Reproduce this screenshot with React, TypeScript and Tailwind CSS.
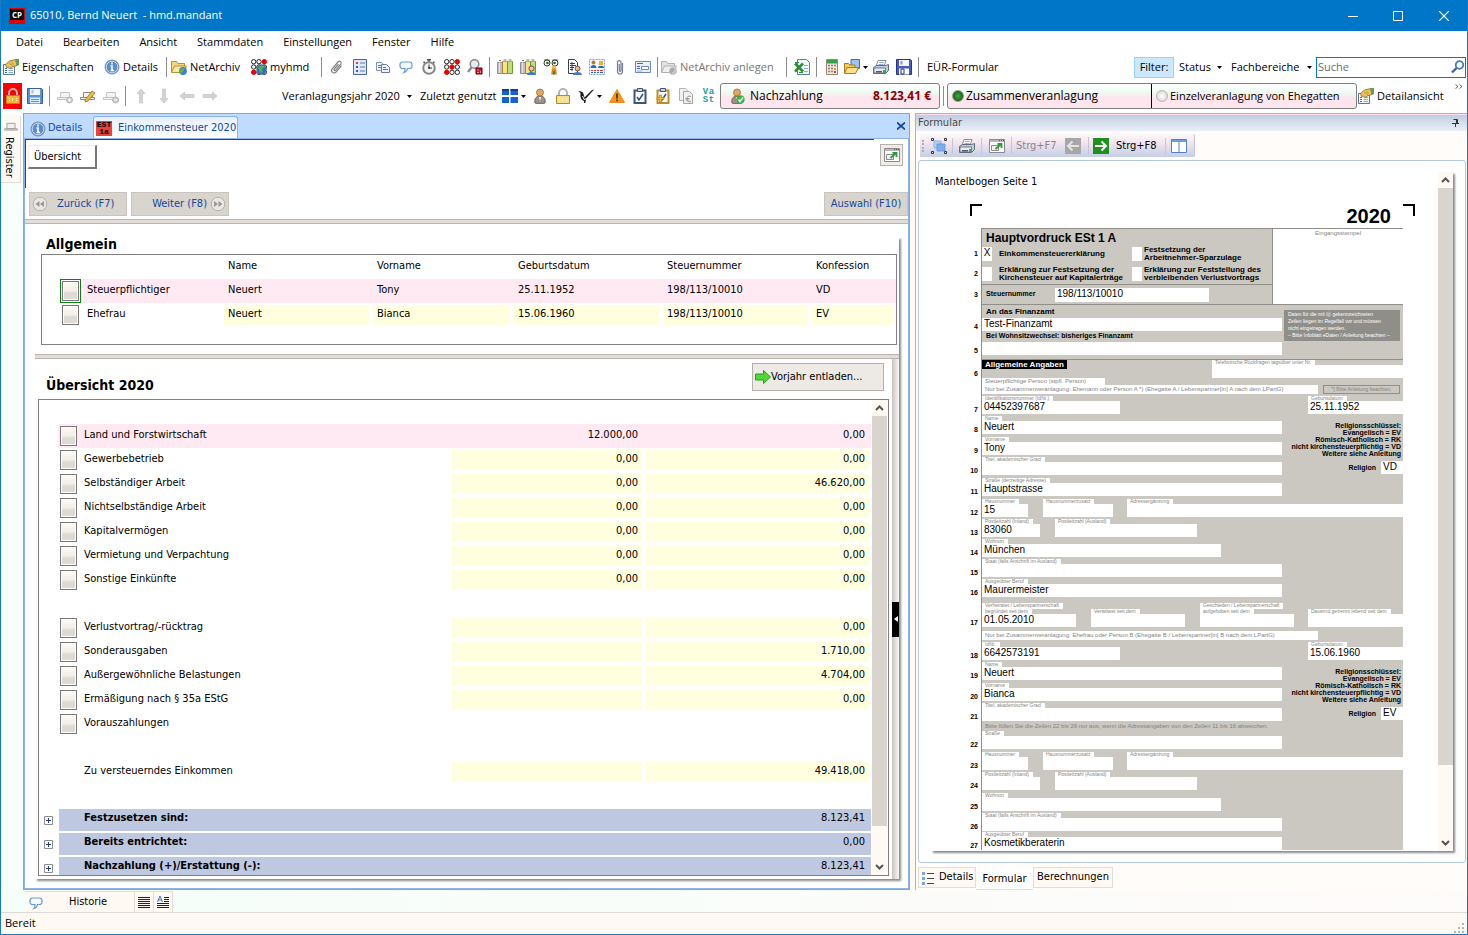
import React from 'react';

type Kids = { children?: React.ReactNode };

/* ---------- icons ---------- */

const Svg: React.FC<Kids & { className?: string; box?: string }> = ({ children, className = 'w-4 h-4', box = '0 0 16 16' }) => (
  <svg viewBox={box} className={`${className} shrink-0`} fill="none" aria-hidden="true">
    {children}
  </svg>
);

const Caret = () => (
  <Svg className="w-[5px] h-[3px]" box="0 0 5 3"><path d="M0 0h5L2.500 3z" fill="#000" /></Svg>
);

const PropsIcon = () => (
  <Svg>
    <path d="M.5 5.500h11v10H.5z" fill="#f4f8fd" stroke="#56779f" />
    <path d="M2 9.500h2M2 11.500h2M2 13.500h2" stroke="#3b6fb5" />
    <path d="M5.500 9.500h4.500M5.500 11.500h4.500M5.500 13.500h4.500" stroke="#8fa6c4" />
    <path d="M2.500 5.500l4-3.500 6-1.500 1.500 6-5 1.500-2 1.500-1.500-1.500-2 .5z" fill="#ecc65a" stroke="#8a6820" strokeWidth=".8" />
    <path d="M6 4.500l4 2M8 3l3 2.500" stroke="#a57d2a" strokeWidth=".7" />
    <path d="M12.500 0H16v6l-2.500 1z" fill="#5da05a" />
  </Svg>
);

const InfoIcon = () => (
  <Svg>
    <circle cx="8" cy="8" r="7" fill="#5b8ccb" stroke="#7a8ea9" />
    <circle cx="8" cy="8" r="5.800" stroke="#c6dcf6" />
    <path d="M8 3.500v2M6.500 7H8v4.500M6.500 11.500h3.500" stroke="#fff" strokeWidth="1.600" />
  </Svg>
);

const FolderIcon: React.FC<{ muted?: boolean }> = ({ muted }) => (
  <Svg>
    <path d="M.5 13V2.500h5l1.500 2h6.500V7" fill={muted ? '#e3e3e3' : '#f6d77b'} stroke={muted ? '#b0b0b0' : '#b98f2e'} />
    <path d="M.5 13.500L3.500 7h12l-3 6.500z" fill={muted ? '#efefef' : '#fbe9a6'} stroke={muted ? '#b0b0b0' : '#b98f2e'} />
    <circle cx="12" cy="12" r="3.900" fill={muted ? '#c4c4c4' : '#3c82c9'} />
    <path d="M9.500 10l3-1 1 2-2 2-1 2-2-2z" fill={muted ? '#a8a8a8' : '#5cb24b'} />
  </Svg>
);

const dots = [2.7, 8, 13.3];

const DotsIcon: React.FC<{ globe?: boolean }> = ({ globe }) => (
  <Svg>
    {dots.map((y, r) =>
      dots.map((x, c) => {
        const red = globe ? (r === 0 && c === 2) || (r === 2 && c === 0) : r + c === 2;
        return <circle key={`${x}-${y}`} cx={x} cy={y} r="2.200" fill={red ? '#f00000' : '#fff'} stroke={red ? '#e00000' : '#222'} />;
      })
    )}
    {globe && (
      <>
        <circle cx="10.500" cy="10.500" r="5.200" fill="#2f6fc4" />
        <path d="M7 8l4-2 3 2-3 2 1 3-3 1-1-3z" fill="#4fae4a" />
      </>
    )}
  </Svg>
);

const ClipIcon: React.FC<{ upright?: boolean }> = ({ upright }) => (
  <Svg>
    <g transform={upright ? undefined : 'rotate(40 8 8)'} stroke={upright ? '#6a7f9c' : '#808080'} strokeWidth="1.200">
      <path d="M10.500 4v8.500a2.500 2.500 0 0 1-5 0V3a1.800 1.800 0 0 1 3.500 0v8.500a.8.800 0 0 1-1.700 0V5" />
    </g>
  </Svg>
);

const ListIcon = () => (
  <Svg>
    <path d="M1.500.5h13v15h-13z" fill="#dfe9fa" stroke="#4666a8" />
    <path d="M4 3h2v2H4z" fill="#d8442b" /><path d="M4 7h2v2H4z" fill="#2f63c0" /><path d="M4 11h2v2H4z" fill="#2f63c0" />
    <path d="M8 4h5M8 8h5M8 12h5" stroke="#5a79b6" />
  </Svg>
);

const CopyIcon = () => (
  <Svg>
    <path d="M1.500 3.500h5l2 2v6h-7z" fill="#eef3fc" stroke="#7e93bf" />
    <path d="M6.500 5.500h5l3 3v5h-8z" fill="#eef3fc" stroke="#6379ad" />
    <path d="M8 8.500h3M8 10.500h5M3 6.500h3M3 8.500h3" stroke="#6379ad" />
  </Svg>
);

const ChatIcon = () => (
  <Svg className="w-[14px] h-[14px]" box="1 1 14 14">
    <path d="M4.500 3h7C13 3 14 4 14 5.500v1.500c0 1.500-1 2.500-2.500 2.500H9.500C9 12 8 13 6 13.500c1-1 1-2.500 1-4H4.500C3 9.500 2 8.500 2 7V5.500C2 4 3 3 4.500 3z" fill="#f3f9ff" stroke="#6a9bd4" strokeWidth="1.200" />
  </Svg>
);

const WatchIcon = () => (
  <Svg>
    <path d="M6 .8h4M8 1v2M2.500 3l1.500 1M13.500 3L12 4" stroke="#555" strokeWidth="1.600" />
    <circle cx="8" cy="9" r="5.800" fill="#f4f4f4" stroke="#888" strokeWidth="2" />
    <path d="M8 5.500V9h3" stroke="#333" />
    <circle cx="8" cy="9" r="1" fill="#333" />
  </Svg>
);

const SearchDiceIcon = () => (
  <Svg>
    <circle cx="7.500" cy="5" r="4.300" fill="#e6ecef" stroke="#8b8b8b" strokeWidth="1.600" />
    <path d="M4.500 8.500L1 13" stroke="#8b8b8b" strokeWidth="2.400" />
    <path d="M9 9h6v6H9z" fill="#d5162a" stroke="#5e000c" />
    <path d="M10.500 10.500h1v1h-1zM13 12.500h1v1h-1zM10.500 13h1v1h-1z" fill="#fff" />
  </Svg>
);

const BooksIcon: React.FC<{ person?: boolean }> = ({ person }) => (
  <Svg>
    <path d="M.5 3.500h5v11h-5z" fill="#c3bcd6" stroke="#8f88a8" /><path d="M5.500 2.500h5v12h-5z" fill="#f5d862" stroke="#a88a22" />
    <path d="M10.500 2.500h5v12h-5z" fill="#a5cf5c" stroke="#6c9a2c" />
    <path d="M2.500 1v13M7 1v13M9 1v13M12 1v13M14 1v13" stroke="#fffbe0" strokeWidth=".6" />
    <path d="M2 1.500h2M6.500 1h3M11.500 1h3" stroke="#777" />
    {person && (
      <>
        <path d="M7 16c0-4 9-4 9 0z" fill="#3d7ac8" />
        <circle cx="11.500" cy="9.500" r="2.600" fill="#f1c49a" stroke="#5a3a1a" strokeWidth=".8" />
      </>
    )}
  </Svg>
);

const EyesIcon = () => (
  <Svg>
    <circle cx="4" cy="4" r="3" fill="#fff" stroke="#333" /><circle cx="12" cy="4" r="3" fill="#fff" stroke="#333" />
    <circle cx="4.500" cy="4" r="1.300" fill="#1d6a2a" /><circle cx="11.500" cy="4" r="1.300" fill="#1d6a2a" />
    <path d="M1 1.500c2-2 4-1 6 0M9 1.500c2-1 4-2 6 0" stroke="#5e7a20" />
    <circle cx="11" cy="8.500" r="2.200" fill="#f0c030" /><path d="M8 15.500l1-6h4l1 6z" fill="#df8a1f" /><path d="M10 12h2v3.500h-2z" fill="#2f8b3a" />
  </Svg>
);

const DocPersonIcon = () => (
  <Svg>
    <path d="M2.500.5h6l3 3v11h-9z" fill="#fff" stroke="#33435c" />
    <path d="M4 4.500h5M4 6.500h6M4 8.500h4M4 10.500h3M6 3v9" stroke="#33435c" />
    <path d="M7 16c0-4 9-4 9 0z" fill="#3d7ac8" /><circle cx="11.500" cy="9.500" r="2.500" fill="#e9b98a" stroke="#4c3523" strokeWidth=".8" />
  </Svg>
);

const PeopleIcon = () => (
  <Svg>
    <path d="M.5.5h15v15H.5z" fill="#f5f9ff" stroke="#7ea0d0" strokeDasharray="2 1" />
    <circle cx="4.500" cy="3.500" r="2" fill="#b57a3c" /><path d="M1.500 9c0-4 6-4 6 0z" fill="#2d62b5" />
    <path d="M10 2h4v4h-4z" fill="#f0b030" /><path d="M9 9c0-3 6-3 6 0z" fill="#2d62b5" />
    <path d="M2 11.500h2M5 11.500h2M8 11.500h2M11 11.500h3" stroke="#d03a2a" />
    <path d="M2 13.500h2M5 13.500h2M8 13.500h2M11 13.500h3" stroke="#2d62b5" />
  </Svg>
);

const CardIcon = () => (
  <Svg>
    <path d="M.5 2.500h15v11H.5z" fill="#eaf0fb" stroke="#6b87bd" />
    <path d="M2 4.500h6M2 7.500h3M2 9.500h3" stroke="#3f68b5" /><path d="M6.500 7.500h7v3h-7z" fill="#fff" stroke="#6b87bd" /><path d="M2 12h5" stroke="#9bb0d8" />
  </Svg>
);

const ExcelIcon = () => (
  <Svg>
    <path d="M3.500.5h9l3 3v12h-12z" fill="#f0f7fb" stroke="#5e7f9f" />
    <path d="M10 6.500h4M10 9.500h4M10 12.500h4" stroke="#8fb0c8" />
    <path d="M1 4.500l8 8M9 4.500l-8 8" stroke="#2f8a3c" strokeWidth="2.600" /><path d="M1 3.500h4M5 13.500h4" stroke="#2f8a3c" />
  </Svg>
);

const CalcIcon = () => (
  <Svg>
    <path d="M2.500.5h11v15h-11z" fill="#f1e8dc" stroke="#9b8672" /><path d="M3 1h10v3.500H3z" fill="#36a048" />
    <path d="M4 6.500h2M7 6.500h2M10 6.500h2M4 9.500h2M7 9.500h2M4 12.500h2M7 12.500h2" stroke="#8b7c6b" strokeWidth="1.500" /><path d="M10 9h2v2h-2z" fill="#e59a2f" /><path d="M10 12h2v2h-2z" fill="#d5442f" />
  </Svg>
);

const OpenFolderIcon = () => (
  <Svg>
    <path d="M7 .5h8.500v9H7z" fill="#9cc4f2" stroke="#3c72b5" />
    <path d="M.5 14V4.500h4L6 6h5v3" fill="#f4cb5b" stroke="#a87c1c" /><path d="M.5 14.500L3 8.500h11.500l-3 6z" fill="#fce08b" stroke="#a87c1c" />
  </Svg>
);

const PrinterIcon = () => (
  <Svg>
    <path d="M5 1.500h8l-2 6H3z" fill="#fff" stroke="#7f8ea3" /><path d="M6 3.500h5M5.500 5.500h5" stroke="#8fb0d8" />
    <path d="M.5 8.500l3-2h9l3-1v6l-3 3H.5z" fill="#c4cbd6" stroke="#5f6b7d" /><path d="M1 9h11.500v5H1z" fill="#e7ebf1" stroke="#5f6b7d" strokeWidth=".8" />
    <path d="M3 12h6v1.500H3z" fill="#505a69" /><path d="M10 11h3v3h-3z" fill="#33b04a" />
  </Svg>
);

const DiskIcon: React.FC<{ light?: boolean }> = ({ light }) => (
  <Svg>
    <path d="M.5.5h14l1 1v14H.5z" fill={light ? '#5a93da' : '#4a5cc4'} stroke={light ? '#2f5fa6' : '#28338c'} />
    <path d="M3 1h10v6H3z" fill="#f3f7fe" /><path d="M4.500 2h2v3.500h-2z" fill={light ? '#9ec0ea' : '#8a94d8'} />
    <path d="M3 9.500h10v6H3z" fill={light ? '#d7efff' : '#fff'} /><path d={light ? 'M4 11.500h8M4 13.500h8' : 'M5 10h3v5H5z'} stroke={light ? '#4fae60' : '#28338c'} />
  </Svg>
);

const PadlockIcon: React.FC<{ body?: string }> = ({ body = '#f2b632' }) => (
  <Svg>
    <path d="M4 8V5a4 4 0 0 1 8 0v3" stroke="#b4b4b4" strokeWidth="2" />
    <path d="M1.500 7.500h13v8h-13z" fill={body} stroke="#b08a30" /><path d="M4 10.500h1M4 12.500h1M7.500 10v3M11 10.500h1M11 12.500h1" stroke="#fff3c8" />
  </Svg>
);

const SheetIcon: React.FC<{ kind: 'add' | 'edit' | 'remove' }> = ({ kind }) => (
  <Svg>
    <path d="M3.500 4.500h9v5h-9zM.5 9.500h14v2H.5z" fill="#f4f4f2" stroke={kind === 'edit' ? '#8a8a8a' : '#c4c4c0'} />
    {kind === 'edit' && <path d="M5 12l7-9 3 2-7 8-3 1z" fill="#f4b942" stroke="#a36e13" strokeWidth=".8" />}
    {kind !== 'edit' && (
      <>
        <circle cx="12.500" cy="12" r="3" fill="#d0d0cc" stroke="#b4b4b0" />
        <path d={kind === 'add' ? 'M11 12h3M12.500 10.500v3' : 'M11 12h3'} stroke="#fff" />
      </>
    )}
  </Svg>
);

const ArrowIcon: React.FC<{ turn: number }> = ({ turn }) => (
  <Svg>
    <path transform={`rotate(${turn} 8 8)`} d="M8 1l4 4.500H9.500V15h-3V5.500H4z" fill="#d4d4d0" stroke="#bdbdb8" strokeWidth=".6" />
  </Svg>
);

const TilesIcon = () => (
  <Svg><path d="M0 1h7v6H0zM8.500 1H16v6H8.500zM0 9h7v6H0zM8.500 9H16v6H8.500z" fill="#1463cf" /><path d="M0 1h7v2H0zM8.500 1H16v2H8.500z" fill="#0b3f9c" /></Svg>
);

const PersonIcon: React.FC<{ check?: boolean }> = ({ check }) => (
  <Svg>
    <path d="M3 15c-1-5 2-7 5-7s6 2 5 7c-3 1-7 1-10 0z" fill="#9d9184" stroke="#6e6459" /><path d="M7 9h2l-1 4z" fill="#fff" />
    <circle cx="8" cy="4.500" r="3.500" fill="#dfa765" stroke="#a06a2c" strokeWidth=".8" />
    {check && <><circle cx="11.500" cy="11.500" r="4.200" fill="#3cb049" /><path d="M9.500 11.500l1.500 2 3-4" stroke="#fff" strokeWidth="1.400" /></>}
  </Svg>
);

const BirdIcon = () => (
  <Svg><path d="M0 3l3 .5 2 1 1.500 5L14 2l2-.5L8.500 10l-1 3.500V15H6v-2C3 12 2 9 2.500 5z" fill="#1c1c1c" /><path d="M4.500 8l2 4 2-2" stroke="#fff" /></Svg>
);

const WarnIcon = () => (
  <Svg><path d="M8 1.500l7.500 13H.5z" fill="#f7941d" stroke="#e98a1c" strokeLinejoin="round" /><path d="M8 5.500v5M8 11.500v1.800" stroke="#3f2a00" strokeWidth="1.600" /></Svg>
);

const ClipboardIcon: React.FC<{ add?: boolean }> = ({ add }) => (
  <Svg>
    <path d="M2.500 2.500h11v12.500h-11z" fill="#fff" stroke={add ? '#c08a2e' : '#3d557b'} strokeWidth="2" /><path d="M5.500.5h5v3h-5z" fill="#c9d3e2" stroke="#3d557b" />
    <path d="M5 9l2 3 4-6" stroke="#2a4a86" strokeWidth="1.500" />
    {add && <path d="M2 9.500h2.500V7h2v2.500H9v2H6.500V14h-2v-2.500H2z" fill="#f3c02c" stroke="#a8762a" strokeWidth=".7" />}
  </Svg>
);

const EuroDocIcon = () => (
  <Svg>
    <path d="M1.500.5h6l2 2v10h-8z" fill="#f1f1ef" stroke="#b2b2ae" /><path d="M5.500 3.500h6l3 3v9h-9z" fill="#f1f1ef" stroke="#a5a5a1" />
    <path d="M13 8.500c-3-1-4 0-4 2.500s1 3.500 4 2.500M7.500 10.500h4M7.500 12h4" stroke="#9a9a96" />
  </Svg>
);

const VastIcon = () => (
  <span className="grid grid-cols-2 w-3 font-['Liberation_Mono',monospace] font-bold text-[9px] leading-[8px] text-[#239b94]">
    <span>V</span><span>a</span><span>S</span><span>t</span>
  </span>
);

const ExportIcon = () => (
  <Svg>
    <path d="M.5 1.500h15v13H.5z" fill="#fff" stroke="#8a8a8a" /><path d="M1 2h14v2H1z" fill="#b9b9b9" /><path d="M10 2.500h1M12 2.500h1M14 2.500h1" stroke="#555" />
    <path d="M2.500 7.500h7v5h-7z" fill="#f3f3f3" stroke="#8a8a8a" /><path d="M6.500 11l5-4.500M8.500 6h4v4" stroke="#2f9c3b" strokeWidth="1.800" />
  </Svg>
);

const SelectIcon = () => (
  <Svg>
    <path d="M3 3h7v7H3z" fill="#b5d0f5" stroke="#8fb4e8" /><path d="M6 6h8v7H6z" fill="#7fadea" stroke="#6c9bdf" />
    <path d="M.5.5h2v2h-2zM13.500.5h2v2h-2zM.5 13.500h2v2h-2zM13.500 13.500h2v2h-2z" fill="#fff" stroke="#333" />
  </Svg>
);

const GreenArrow: React.FC<{ back?: boolean }> = ({ back }) => (
  <Svg>
    <path d="M0 0h16v16H0z" fill={back ? '#a7a7a7' : '#1f8f22'} />
    <path d={back ? 'M14 8H3M7.500 3.500L3 8l4.500 4.500' : 'M2 8h11M8.500 3.500L13 8l-4.500 4.500'} stroke={back ? '#e4e4e4' : '#fff'} strokeWidth="2" />
  </Svg>
);

const ColumnsIcon = () => (
  <Svg><path d="M.5 1.500h15v13H.5zM8 2v12" fill="#fff" stroke="#4d80c7" /><path d="M1 2h14v2H1z" fill="#6f9fe0" /></Svg>
);

const LinesIcon: React.FC<{ letter?: boolean }> = ({ letter }) => (
  <Svg className="w-3 h-3" box="0 0 12 12">
    <path d={letter ? 'M7 1.500h5M7 3.500h5M7 5.500h5M0 7.500h12M0 9.500h12M0 11.500h12' : 'M0 1.500h12M0 3.500h12M0 5.500h12M0 7.500h12M0 9.500h12M0 11.500h12'} stroke="#222" />
    {letter && <path d="M.5 6L3 0l2.500 6M1.500 4h3" stroke="#3a76bd" />}
  </Svg>
);

const BulletsIcon = () => (
  <Svg className="w-3 h-[14px]" box="0 0 12 14">
    <path d="M0 1h3v3H0zM0 6h3v3H0zM0 11h3v3H0z" fill="#7aa5e0" /><path d="M5 2.500h7M5 7.500h7M5 12.500h7" stroke="#444" />
  </Svg>
);

const ScrollArrow: React.FC<{ down?: boolean }> = ({ down }) => (
  <Svg className="w-[9px] h-[6px]" box="0 0 9 6">
    <path d={down ? 'M1 1l3.500 3.500L8 1' : 'M1 5l3.500-3.500L8 5'} stroke="#555" strokeWidth="2" />
  </Svg>
);

/* ---------- small parts ---------- */

const Sep = () => <span className="w-px h-5 mx-[3px] shrink-0 bg-[#8c8c8c]" />;

const IconButton: React.FC<Kids & { label: string }> = ({ label, children }) => (
  <button aria-label={label} className="w-[23px] h-6 flex items-center justify-center shrink-0">{children}</button>
);

const TextButton: React.FC<Kids & { className: string }> = ({ className, children }) => (
  <button className={`h-6 flex items-center gap-[3px] shrink-0 whitespace-nowrap ${className}`}>{children}</button>
);

const RowButton: React.FC<{ label: string; focused?: boolean }> = ({ label, focused }) => (
  <button
    aria-label={label}
    className={`block w-[17px] h-5 border border-[#777] bg-linear-to-b from-[#fff9f3] via-[#f3eee9] via-50% to-[#dedad4] to-60% shadow-[inset_0_0_0_1px_#fff] ${focused ? 'outline outline-offset-1 outline-[#0a8010]' : ''}`}
  />
);

const ScrollBar: React.FC<{ thumb: string }> = ({ thumb }) => (
  <div className="w-[15px] shrink-0 flex flex-col items-center bg-[#fff9f3]">
    <button aria-label="Nach oben" className="h-4 flex items-center shrink-0"><ScrollArrow /></button>
    <div className={`w-full bg-[#d9d4ce] ${thumb}`} />
    <button aria-label="Nach unten" className="h-4 mt-auto flex items-center shrink-0"><ScrollArrow down /></button>
  </div>
);

/* ---------- bars at the top ---------- */

const TitleBar = () => (
  <header className="h-[31px] flex items-center pl-2 bg-[#0076c8] text-white">
    <span className="w-4 h-4 p-px bg-[#e00000] text-[8px] font-bold text-center">
      <span className="block h-[11px] leading-[11px] bg-black">CP</span>
    </span>
    <h1 className="ml-[5px] flex-1 whitespace-pre">65010, Bernd Neuert  - hmd.mandant</h1>
    <button aria-label="Minimieren" className="w-[45px] flex justify-center"><Svg className="w-[10px] h-[10px]" box="0 0 10 10"><path d="M0 5.500h10" stroke="#fff" /></Svg></button>
    <button aria-label="Maximieren" className="w-[45px] flex justify-center"><Svg className="w-[10px] h-[10px]" box="0 0 10 10"><path d="M.5.5h9v9h-9z" stroke="#fff" /></Svg></button>
    <button aria-label="Schließen" className="w-[47px] flex justify-center"><Svg className="w-[10px] h-[10px]" box="0 0 10 10"><path d="M0 0l10 10M10 0L0 10" stroke="#fff" strokeWidth="1.200" /></Svg></button>
  </header>
);

const MenuBar = () => (
  <nav className="h-[23px] flex items-center pl-[15px] gap-5 whitespace-nowrap">
    {['Datei', 'Bearbeiten', 'Ansicht', 'Stammdaten', 'Einstellungen', 'Fenster', 'Hilfe'].map((item) => (
      <button key={item}>{item}</button>
    ))}
  </nav>
);

const MainToolbar = () => (
  <div className="h-[26px] flex items-center pl-0.5 pr-px">
    <TextButton className="w-[101px]"><PropsIcon />Eigenschaften</TextButton>
    <TextButton className="w-[59px]"><InfoIcon />Details</TextButton>
    <Sep />
    <TextButton className="w-[81px] pl-px"><FolderIcon />NetArchiv</TextButton>
    <TextButton className="w-[67px]"><DotsIcon globe />myhmd</TextButton>
    <Sep />
    <IconButton label="Anlagen"><ClipIcon /></IconButton>
    <IconButton label="Liste"><ListIcon /></IconButton>
    <IconButton label="Kopieren"><CopyIcon /></IconButton>
    <IconButton label="Notiz"><ChatIcon /></IconButton>
    <IconButton label="Zeiterfassung"><WatchIcon /></IconButton>
    <IconButton label="hmd"><DotsIcon /></IconButton>
    <IconButton label="Suche"><SearchDiceIcon /></IconButton>
    <Sep />
    <IconButton label="Ordner"><BooksIcon /></IconButton>
    <IconButton label="Mandantenordner"><BooksIcon person /></IconButton>
    <IconButton label="Übersicht"><EyesIcon /></IconButton>
    <IconButton label="Dokument"><DocPersonIcon /></IconButton>
    <IconButton label="Personen"><PeopleIcon /></IconButton>
    <IconButton label="Anhang"><ClipIcon upright /></IconButton>
    <IconButton label="Karte"><CardIcon /></IconButton>
    <Sep />
    <TextButton className="w-[122px] text-[#777]"><FolderIcon muted />NetArchiv anlegen</TextButton>
    <Sep />
    <IconButton label="Excel"><ExcelIcon /></IconButton>
    <Sep />
    <IconButton label="Rechner"><CalcIcon /></IconButton>
    <TextButton className="w-[26px] justify-center"><OpenFolderIcon /><Caret /></TextButton>
    <IconButton label="Drucken"><PrinterIcon /></IconButton>
    <IconButton label="Speichern"><DiskIcon /></IconButton>
    <Sep />
    <TextButton className="pl-[5px]">EÜR-Formular</TextButton>
    <button className="ml-auto w-10 h-[21px] border border-[#99d1ff] bg-[#cce8ff] shrink-0">Filter:</button>
    <button className="w-[53px] pl-[5px] pr-[5px] flex items-center justify-between shrink-0">Status<Caret /></button>
    <button className="w-[89px] pl-1 pr-1 flex items-center justify-between shrink-0">Fachbereiche<Caret /></button>
    <label className="w-[150px] h-[21px] flex items-center border border-[#0078d7] bg-white shrink-0">
      <input aria-label="Suche" placeholder="Suche" className="w-0 flex-1 pl-px outline-none placeholder:text-[#6d6d6d]" />
      <Svg className="w-[14px] h-[14px]" box="0 0 14 14"><circle cx="8.500" cy="5" r="3.800" stroke="#3f7dc4" strokeWidth="1.800" /><path d="M5.500 8L1 12.500" stroke="#4a5fa0" strokeWidth="2.400" /></Svg>
    </label>
  </div>
);

const glossy = 'bg-linear-to-b from-white via-[#eefaf2] via-35% to-[#ffe6ee] to-55%';

const TaxToolbar = () => (
  <div className="h-[33px] pb-px flex items-center pl-0.5">
    <button aria-label="Gesperrt" className="w-[19px] h-[26px] flex items-center justify-center bg-[#f00] shrink-0"><PadlockIcon /></button>
    <button aria-label="Sichern" className="w-6 pl-0.5 flex justify-center shrink-0"><DiskIcon light /></button>
    <Sep />
    <IconButton label="Neu"><SheetIcon kind="add" /></IconButton>
    <IconButton label="Bearbeiten"><SheetIcon kind="edit" /></IconButton>
    <IconButton label="Löschen"><SheetIcon kind="remove" /></IconButton>
    <Sep />
    <IconButton label="Nach oben"><ArrowIcon turn={0} /></IconButton>
    <IconButton label="Nach unten"><ArrowIcon turn={180} /></IconButton>
    <IconButton label="Zurück"><ArrowIcon turn={270} /></IconButton>
    <IconButton label="Vor"><ArrowIcon turn={90} /></IconButton>
    <button className="ml-[60px] w-[138px] pl-px pr-[7px] flex items-center justify-between whitespace-nowrap shrink-0">Veranlagungsjahr 2020<Caret /></button>
    <button className="w-[109px] pl-px pr-0.5 flex items-center gap-[3px] whitespace-nowrap shrink-0"><span className="flex-1 text-left">Zuletzt genutzt</span><TilesIcon /><Caret /></button>
    <IconButton label="Person"><PersonIcon /></IconButton>
    <IconButton label="Schloss"><PadlockIcon body="#f7e08a" /></IconButton>
    <TextButton className="w-[31px] justify-center"><BirdIcon /><Caret /></TextButton>
    <IconButton label="Hinweise"><WarnIcon /></IconButton>
    <IconButton label="Prüfen"><ClipboardIcon /></IconButton>
    <IconButton label="Übernehmen"><ClipboardIcon add /></IconButton>
    <IconButton label="Bescheid"><EuroDocIcon /></IconButton>
    <IconButton label="VaSt"><VastIcon /></IconButton>
    <button className={`w-[220px] h-[26px] px-2 flex items-center border border-[#808080] rounded-[3px] shrink-0 ${glossy}`}>
      <PersonIcon check />
      <span className="ml-[5px] text-[12px]">Nachzahlung</span>
      <span className="ml-auto text-[12px] font-bold text-[#8b0000]">8.123,41 €</span>
    </button>
    <Sep />
    <fieldset className={`w-[410px] h-[26px] flex border border-[#808080] rounded-[3px] shrink-0 ${glossy}`}>
      <label className="w-1/2 pl-1 flex items-center gap-0.5 border-r border-black text-[12px]">
        <input type="radio" name="veranlagung" defaultChecked className="appearance-none w-3 h-3 rounded-full border border-[#999] bg-radial from-[#3fae3f] to-[#0a4a0a]" />
        Zusammenveranlagung
      </label>
      <label className="w-1/2 pl-1 flex items-center gap-0.5 whitespace-nowrap">
        <input type="radio" name="veranlagung" className="appearance-none w-3 h-3 rounded-full border border-[#b5b5b5] bg-radial from-white to-[#d4d0ca]" />
        Einzelveranlagung von Ehegatten
      </label>
    </fieldset>
    <TextButton className="ml-px"><PropsIcon />Detailansicht</TextButton>
    <button aria-label="Mehr" className="ml-auto mr-1 mb-auto mt-1 shrink-0"><Svg className="w-2 h-[5px]" box="0 0 8 5"><path d="M.5.5l2.500 2-2.500 2M4.500.5l2.500 2-2.500 2" stroke="#5a5a9c" /></Svg></button>
  </div>
);

/* ---------- left: Einkommensteuer ---------- */

const persons = [
  { role: 'Steuerpflichtiger', name: 'Neuert', first: 'Tony', born: '25.11.1952', tax: '198/113/10010', conf: 'VD', active: true },
  { role: 'Ehefrau', name: 'Neuert', first: 'Bianca', born: '15.06.1960', tax: '198/113/10010', conf: 'EV', active: false },
];

const PersonTable = () => (
  <div className="ml-[6px] mr-[2px] h-[91px] shrink-0 border border-[#808080]">
    <table className="w-full table-fixed border-collapse text-left leading-[22px]">
      <colgroup>
        <col className="w-[41px]" /><col className="w-[139px]" /><col className="w-[149px]" /><col className="w-[141px]" />
        <col className="w-[149px]" /><col className="w-[149px]" /><col />
      </colgroup>
      <thead>
        <tr className="h-6 align-top">
          <td /><td />
          {['Name', 'Vorname', 'Geburtsdatum', 'Steuernummer', 'Konfession'].map((h) => (
            <th key={h} className="p-0 pl-[6px] font-normal">{h}</th>
          ))}
        </tr>
      </thead>
      <tbody>
        {persons.map((p) => (
          <tr key={p.role} className={`h-6 align-top ${p.active ? 'bg-[#ffeaf3]' : ''}`}>
            <td className="p-0 pl-5 pt-[2px] bg-white"><RowButton label={p.role} focused={p.active} /></td>
            <td className="p-0 pl-[4px]">{p.role}</td>
            {[p.name, p.first, p.born, p.tax, p.conf].map((v, i) => (
              <td key={i} className="p-0 px-[2px] pt-[2px]">
                <div className={`h-5 pl-1 leading-[18px] ${p.active ? '' : 'bg-[#ffffdf]'}`}>{v}</div>
              </td>
            ))}
          </tr>
        ))}
      </tbody>
    </table>
  </div>
);

type Income = { label?: string; a?: string; b?: string; kind?: 'active' | 'total' | 'plain' | 'sum' };

const incomes: Income[] = [
  {},
  { label: 'Land und Forstwirtschaft', a: '12.000,00', b: '0,00', kind: 'active' },
  { label: 'Gewerbebetrieb', a: '0,00', b: '0,00' },
  { label: 'Selbständiger Arbeit', a: '0,00', b: '46.620,00' },
  { label: 'Nichtselbständige Arbeit', a: '0,00', b: '0,00' },
  { label: 'Kapitalvermögen', a: '0,00', b: '0,00' },
  { label: 'Vermietung und Verpachtung', a: '0,00', b: '0,00' },
  { label: 'Sonstige Einkünfte', a: '0,00', b: '0,00' },
  {},
  { label: 'Verlustvortrag/-rücktrag', b: '0,00' },
  { label: 'Sonderausgaben', b: '1.710,00' },
  { label: 'Außergewöhnliche Belastungen', b: '4.704,00' },
  { label: 'Ermäßigung nach § 35a EStG', b: '0,00' },
  { label: 'Vorauszahlungen', kind: 'plain' },
  {},
  { label: 'Zu versteuerndes Einkommen', b: '49.418,00', kind: 'sum' },
  {},
  { label: 'Festzusetzen sind:', b: '8.123,41', kind: 'total' },
  { label: 'Bereits entrichtet:', b: '0,00', kind: 'total' },
  { label: 'Nachzahlung (+)/Erstattung (-):', b: '8.123,41', kind: 'total' },
];

const IncomeRow: React.FC<{ row: Income }> = ({ row }) => {
  if (!row.label) return <tr className="h-6"><td colSpan={5} /></tr>;

  if (row.kind === 'total') {
    return (
      <tr className="h-6 align-top">
        <td className="p-0 pt-2 pl-[5px]">
          <button aria-label="Aufklappen" className="block">
            <Svg className="w-[9px] h-[9px]" box="0 0 9 9"><path d="M.5.5h8v8h-8z" fill="#fff" stroke="#8c8c8c" /><path d="M2 4.500h5M4.500 2v5" stroke="#1d3c8f" /></Svg>
          </button>
        </td>
        <td colSpan={4} className="p-0 pt-px pl-px">
          <div className="h-[22px] flex justify-between pl-[25px] pr-[6px] bg-[#bec8e0] leading-[18px]">
            <b>{row.label}</b><span>{row.b}</span>
          </div>
        </td>
      </tr>
    );
  }

  const box = row.kind === 'active' || row.kind === 'plain' ? '' : 'bg-[#ffffdf]';
  return (
    <tr className={`h-6 align-top ${row.kind === 'active' ? 'bg-[#ffeaf3]' : ''}`}>
      <td className="p-0 bg-white" />
      <td className="p-0 pt-[2px] pl-[2px]">{row.kind !== 'sum' && <RowButton label={row.label} />}</td>
      <td className="p-0 pl-[2px]">{row.label}</td>
      <td className="p-0 pt-[2px] px-[2px]"><div className={`h-5 pr-1 leading-[18px] text-right ${box}`}>{row.a}</div></td>
      <td className="p-0 pt-[2px] px-[2px]"><div className={`h-5 pr-1 leading-[18px] text-right ${box}`}>{row.b}</div></td>
    </tr>
  );
};

const IncomeTable = () => (
  <div className="ml-[3px] mr-[3px] mb-[3px] pr-px flex-1 min-h-0 flex gap-px border border-[#808080] overflow-hidden">
    <div className="flex-1 min-h-0 overflow-hidden">
      <table className="w-full table-fixed border-collapse leading-[22px]">
        <colgroup>
          <col className="w-[19px]" /><col className="w-6" /><col /><col className="w-[194px]" /><col className="w-[227px]" />
        </colgroup>
        <tbody>{incomes.map((row, i) => <IncomeRow key={i} row={row} />)}</tbody>
      </table>
    </div>
    <ScrollBar thumb="h-[410px]" />
  </div>
);

const splitter = 'h-[5px] shrink-0 border-y border-[#bcb6b0] bg-[#e2ddd8]';
const navButton = 'h-6 flex items-center border border-[#c9c4be] bg-[#d8d4ce] text-[#15489a]';
const heading = "font-['DejaVu_Sans_Condensed',sans-serif] font-bold text-[14px] leading-[14px]";

const Round: React.FC<{ next?: boolean }> = ({ next }) => (
  <Svg>
    <circle cx="8" cy="8" r="6.800" fill="#e9e7e4" stroke="#b5b1ac" />
    <path d={next ? 'M4 5l4 3-4 3zM8.500 5l4 3-4 3z' : 'M12 5L8 8l4 3zM7.500 5l-4 3 4 3z'} fill="#9b9894" />
  </Svg>
);

const TaxPanel = () => (
  <section className="flex-1 min-w-0 flex flex-col border border-[#a5a29b] bg-white shadow-[inset_0_0_0_1px_#8fb3e8]">
    <div className="h-[25px] shrink-0 flex items-end bg-[#bfdbff] text-[#15489a] border-b border-[#8fb3e8]" role="tablist">
      <button role="tab" className="h-[19px] w-[69px] pl-[6px] flex items-center gap-[2px]"><InfoIcon />Details</button>
      <button role="tab" aria-selected="true" className="h-[22px] w-[145px] pt-[2px] pl-0.5 flex items-center gap-[6px] border border-b-0 border-[#8fb3e8] rounded-t-[3px] bg-linear-to-b from-[#e4f0ff] to-white whitespace-nowrap">
        <span className="w-4 h-[15px] bg-[#e8413f] text-black font-['Liberation_Mono',monospace] font-bold text-[8px] leading-[7px] text-center shrink-0">EST<br />1a</span>
        Einkommensteuer 2020
      </button>
      <button aria-label="Schließen" className="ml-auto mr-1 mb-2"><Svg className="w-2 h-2" box="0 0 8 8"><path d="M0 .5l8 7M8 .5l-8 7" stroke="#15489a" strokeWidth="1.800" /></Svg></button>
    </div>

    <div className="mx-px flex items-start">
      <div className="flex-1 h-[49px] pt-[5px] pl-0.5 border-t border-l border-[#0f4c96]">
        <button className="w-[69px] h-6 pt-px text-left pl-[5px] border border-[#f3ece4] border-r-2 border-b-2 border-r-[#777] border-b-[#777] bg-white">Übersicht</button>
      </div>
      <button aria-label="Exportieren" className="mt-[5px] ml-[6px] mr-[5px] w-[23px] h-[22px] flex items-center justify-center border border-[#b5b1ac] bg-[#f0ece8]"><ExportIcon /></button>
    </div>

    <div className="mt-1 mb-[3px] pl-[5px] pr-[1px] flex gap-1">
      <button className={`${navButton} w-[98px] gap-[9px] pl-0.5`}><Round />Zurück (F7)</button>
      <button className={`${navButton} w-[98px] gap-[3px] pr-0.5 justify-end`}>Weiter (F8)<Round next /></button>
      <button className={`${navButton} w-[84px] ml-auto justify-center`}>Auswahl (F10)</button>
    </div>
    <div className={`${splitter} mx-px`} />

    <div className="mt-[13px] ml-[11px] mr-[10px] mb-[10px] flex-1 min-h-0 flex flex-col shadow-[2px_2px_2px_#8a8a8a] bg-white">
      <h2 className={`pl-[11px] h-[17px] shrink-0 ${heading}`}>Allgemein</h2>
      <PersonTable />
      <div className={`${splitter} mt-[9px]`} />
      <div className="flex-1 min-h-0 flex">
        <div className="flex-1 min-w-0 min-h-0 flex flex-col">
          <div className="h-10 shrink-0 pt-1 pl-[11px] pr-2 flex items-start justify-between">
            <h2 className={`pt-[15px] ${heading}`}>Übersicht 2020</h2>
            <button className="w-[132px] h-7 flex items-center pl-0.5 border border-[#b5b1ac] bg-[#ede9e4]">
              <Svg><path d="M.5 5h8V1.500L15.500 8l-7 6.500V11h-8z" fill="#4fd836" stroke="#2c9a1c" /></Svg>
              Vorjahr entladen...
            </button>
          </div>
          <IncomeTable />
        </div>
        <div className="w-[7px] flex items-center bg-linear-to-r from-[#c9c4be] to-[#fbf8f4] shrink-0">
          <button aria-label="Einklappen" className="w-[7px] h-[35px] flex items-center justify-center bg-black">
            <Svg className="w-1 h-[6px]" box="0 0 4 6"><path d="M4 0v6L0 3z" fill="#fff" /></Svg>
          </button>
        </div>
      </div>
    </div>
  </section>
);

/* ---------- right: form preview ---------- */

const No: React.FC<{ n?: number }> = ({ n }) => (
  <div className="w-[19px] shrink-0 self-stretch flex items-end justify-end pr-[3px] bg-white font-bold text-[7px] leading-[9px]">{n}</div>
);

const Line: React.FC<Kids & { n?: number; h?: string; className?: string }> = ({ n, h = 'h-5', className = '', children }) => (
  <div className={`flex ${h}`}>
    <No n={n} />
    <div className={`flex-1 min-w-0 flex items-end border-l border-[#8f8e88] ${className}`}>{children}</div>
  </div>
);

const Tiny: React.FC<Kids & { className?: string }> = ({ className = 'h-[5px]', children }) => (
  <span className={`self-start block pl-[3px] pr-1 bg-white text-[#85847f] text-[5px] leading-[5px] whitespace-nowrap ${className}`}>{children}</span>
);

const Field: React.FC<{ label?: string; w: string; value?: string }> = ({ label, w, value }) => (
  <div className={`${w} shrink-0 flex flex-col`}>
    {label && <Tiny>{label}</Tiny>}
    <div className="h-[13px] pl-[2px] bg-white text-[10px] leading-3 whitespace-nowrap">{value}</div>
  </div>
);

const Religion: React.FC<{ value: string }> = ({ value }) => (
  <div className="w-[121px] shrink-0 pt-2 flex flex-col items-end bg-[#cac8c1] font-bold text-[7px] leading-[7px] whitespace-nowrap">
    <div className="pr-[2px] text-right">
      <p>Religionsschlüssel:</p>
      <p>Evangelisch = EV</p>
      <p>Römisch-Katholisch = RK</p>
      <p>nicht kirchensteuerpflichtig = VD</p>
      <p>Weitere siehe Anleitung</p>
    </div>
    <div className="mt-1 flex items-center gap-[5px]">
      Religion
      <span className="w-[22px] h-[13px] pl-[2px] bg-white text-[10px] leading-3 font-normal">{value}</span>
    </div>
  </div>
);

const Tick: React.FC<Kids & { mark?: string; w: string }> = ({ mark, w, children }) => (
  <div className={`${w} flex items-center text-[8px] leading-[8px] font-bold whitespace-nowrap`}>
    <span className="w-[10px] h-[14px] bg-white font-normal text-[10px] leading-[11px] text-center shrink-0">{mark}</span>
    {children}
  </div>
);

const HouseLine: React.FC<{ n: number; value?: string }> = ({ n, value }) => (
  <Line n={n} h="h-[21px]">
    <Field label="Hausnummer" w="w-[46px]" value={value} />
    <span className="w-[15px]" />
    <Field label="Hausnummerzusatz" w="w-[70px]" />
    <span className="w-[14px]" />
    <Field label="Adressergänzung" w="w-[276px]" />
  </Line>
);

const ZipLine: React.FC<{ n: number; value?: string }> = ({ n, value }) => (
  <Line n={n}>
    <Field label="Postleitzahl (Inland)" w="w-[58px]" value={value} />
    <span className="w-[15px]" />
    <Field label="Postleitzahl (Ausland)" w="w-[142px]" />
  </Line>
);

const edge = 'border-[#8f8e88]';

const FormSheet = () => (
  <div className="w-[441px] ml-[43px] font-['Liberation_Sans',sans-serif]">
    <div className="h-6 pl-2 -mr-3 flex items-start">
      <span className="w-3 h-3 border-t-2 border-l-2 border-black" />
      <span className="ml-auto mr-3 pt-[2px] font-bold text-[20px] leading-5">2020</span>
      <span className="w-3 h-3 border-t-2 border-r-2 border-black" />
    </div>

    <div className="flex">
      <div className="w-[19px] shrink-0 flex flex-col">
        <div className="h-[30px] flex"><No n={1} /></div>
        <div className="h-5 flex"><No n={2} /></div>
        <div className="h-[21px] flex"><No n={3} /></div>
      </div>
      <div className={`w-[292px] shrink-0 border ${edge} bg-[#cac8c1]`}>
        <p className="h-[15px] pl-1 pt-[3px] font-bold text-[12px] leading-3">Hauptvordruck ESt 1 A</p>
        <div className="h-5 flex">
          <Tick w="w-[150px]" mark="X"><span className="ml-[7px]">Einkommensteuererklärung</span></Tick>
          <Tick w="w-[140px]"><span className="ml-[2px]">Festsetzung der<br />Arbeitnehmer-Sparzulage</span></Tick>
        </div>
        <div className="h-5 flex">
          <Tick w="w-[150px]"><span className="ml-[7px]">Erklärung zur Festsetzung der<br />Kirchensteuer auf Kapitalerträge</span></Tick>
          <Tick w="w-[140px]"><span className="ml-[2px]">Erklärung zur Feststellung des<br />verbleibenden Verlustvortrags</span></Tick>
        </div>
        <div className={`h-5 flex items-center border-t ${edge}`}>
          <span className="w-[73px] pl-1 font-bold text-[7px]">Steuernummer</span>
          <span className="w-[154px] h-[14px] pl-[2px] bg-white text-[10px] leading-3">198/113/10010</span>
        </div>
      </div>
      <div className={`flex-1 border-y ${edge} bg-white pt-px text-center text-[#85847f] text-[6px] leading-[6px]`}>Eingangsstempel</div>
    </div>

    <div className="flex bg-[#cac8c1]">
      <div className="w-[320px] shrink-0">
        <Line h="h-[13px]"><p className="pl-1 font-bold text-[8px] leading-[13px]">An das Finanzamt</p></Line>
        <Line n={4} h="h-[13px]"><Field w="w-[300px]" value="Test-Finanzamt" /></Line>
        <Line h="h-[11px]"><p className="pl-1 font-bold text-[7px] leading-[12px]">Bei Wohnsitzwechsel: bisheriges Finanzamt</p></Line>
        <Line n={5} h="h-[13px]"><Field w="w-[300px]" /></Line>
        <Line h="h-1" />
      </div>
      <div className="mt-[5px] ml-[2px] w-[116px] h-[31px] pl-1 pt-px bg-[#8f8e88] text-white text-[5px] leading-[7px] whitespace-nowrap">
        Daten für die mit ⓔ gekennzeichneten
        <br />Zeilen liegen im Regelfall vor und müssen
        <br />nicht eingetragen werden.
        <br />– Bitte Infoblatt eDaten / Anleitung beachten –
      </div>
    </div>

    <Line n={6} h="h-[19px]" className={`bg-[#cac8c1] justify-between border-t ${edge}`}>
      <h3 className="self-start h-[9px] pl-[3px] pr-[3px] bg-black text-white font-bold text-[8px] leading-[9px]">Allgemeine Angaben</h3>
      <Field label="Telefonische Rückfragen tagsüber unter Nr." w="w-[191px]" />
    </Line>
    <Line h="h-[7px]" className="bg-[#cac8c1]">
      <span className="h-[7px] w-[123px] pl-[3px] bg-white text-[#85847f] text-[6px] leading-[7px] whitespace-nowrap">Steuerpflichtige Person (stpfl. Person)</span>
    </Line>
    <Line h="h-[9px]" className="bg-[#cac8c1]">
      <span className="h-[9px] w-[336px] pl-[3px] bg-white text-[#85847f] text-[6px] leading-[8px] whitespace-nowrap">
        Nur bei Zusammenveranlagung: Ehemann oder Person A *) (Ehegatte A / Lebenspartner[in] A nach dem LPartG)
      </span>
      <span className={`ml-[5px] w-[77px] h-[9px] border ${edge} text-[#85847f] text-[5px] leading-[7px] text-center`}>*) Bitte Anleitung beachten.</span>
    </Line>
    <Line n={7} className="bg-[#cac8c1] justify-between">
      <Field label="Identifikationsnummer (IdNr.)" w="w-[138px]" value="04452397687" />
      <Field label="Geburtsdatum" w="w-[95px]" value="25.11.1952" />
    </Line>

    <div className="flex bg-[#cac8c1]">
      <div className="w-[320px] shrink-0">
        <Line n={8}><Field label="Name" w="w-[300px]" value="Neuert" /></Line>
        <Line n={9} h="h-[21px]"><Field label="Vorname" w="w-[300px]" value="Tony" /></Line>
        <Line n={10}><Field label="Titel, akademischer Grad" w="w-[300px]" /></Line>
        <Line n={11} h="h-[21px]"><Field label="Straße (derzeitige Adresse)" w="w-[300px]" value="Hauptstrasse" /></Line>
      </div>
      <Religion value="VD" />
    </div>

    <div className="bg-[#cac8c1]">
      <HouseLine n={12} value="15" />
      <ZipLine n={13} value="83060" />
      <Line n={14}><Field label="Wohnort" w="w-[239px]" value="München" /></Line>
      <Line n={15}><Field label="Staat (falls Anschrift im Ausland)" w="w-[300px]" /></Line>
      <Line n={16}><Field label="Ausgeübter Beruf" w="w-[300px]" value="Maurermeister" /></Line>
      <Line n={17} h="h-[30px]">
        <div className="w-[94px] shrink-0 flex flex-col">
          <Tiny className="h-[6px]">Verheiratet / Lebenspartnerschaft</Tiny>
          <Field label="begründet seit dem" w="w-[94px]" value="01.05.2010" />
        </div>
        <span className="w-[15px]" />
        <Field label="Verwitwet seit dem" w="w-[94px]" />
        <span className="w-[15px]" />
        <div className="w-[94px] shrink-0 flex flex-col">
          <Tiny className="h-[6px]">Geschieden / Lebenspartnerschaft</Tiny>
          <Field label="aufgehoben seit dem" w="w-[94px]" />
        </div>
        <span className="w-[14px]" />
        <Field label="Dauernd getrennt lebend seit dem" w="w-[95px]" />
      </Line>
      <Line h="h-[13px]">
        <span className="h-[9px] w-[336px] pl-[3px] bg-white text-[#85847f] text-[6px] leading-[9px] whitespace-nowrap">
          Nur bei Zusammenveranlagung: Ehefrau oder Person B (Ehegatte B / Lebenspartner[in] B nach dem LPartG)
        </span>
      </Line>
      <Line n={18} className="justify-between">
        <Field label="IdNr." w="w-[138px]" value="6642573191" />
        <Field label="Geburtsdatum" w="w-[95px]" value="15.06.1960" />
      </Line>
    </div>

    <div className="flex bg-[#cac8c1]">
      <div className="w-[320px] shrink-0">
        <Line n={19}><Field label="Name" w="w-[300px]" value="Neuert" /></Line>
        <Line n={20} h="h-[21px]"><Field label="Vorname" w="w-[300px]" value="Bianca" /></Line>
        <Line n={21}><Field label="Titel, akademischer Grad" w="w-[300px]" /></Line>
      </div>
      <Religion value="EV" />
    </div>

    <div className="bg-[#cac8c1]">
      <Line h="h-[9px]">
        <p className="pl-[3px] text-[#85847f] text-[6px] leading-[7px] whitespace-nowrap">
          Bitte füllen Sie die Zeilen 22 bis 26 nur aus, wenn die Adressangaben von den Zeilen 11 bis 16 abweichen.
        </p>
      </Line>
      <Line n={22} h="h-[19px]"><Field label="Straße" w="w-[300px]" /></Line>
      <HouseLine n={23} />
      <ZipLine n={24} />
      <Line n={25} h="h-[21px]"><Field label="Wohnort" w="w-[239px]" /></Line>
      <Line n={26}><Field label="Staat (falls Anschrift im Ausland)" w="w-[300px]" /></Line>
      <Line n={27} h="h-[19px]"><Field label="Ausgeübter Beruf" w="w-[300px]" value="Kosmetikberaterin" /></Line>
    </div>
  </div>
);

const FormPanel = () => (
  <aside className="w-[552px] shrink-0 flex flex-col border-t border-l border-[#b5b1ac] bg-[#fffcf9]">
    <div className="h-[17px] shrink-0 pl-0.5 pr-2 flex items-center justify-between text-[#4a4a4a] bg-linear-to-b from-[#bfcde4] via-[#d3dbea] via-40% to-[#eaf0f8] border-t border-t-[#fbdfec]">
      Formular
      <button aria-label="Anheften"><Svg className="w-[7px] h-2" box="0 0 7 8"><path d="M1.500.5h4v4h-4M4.500 1v4M0 4.500h7M3.500 5v3" stroke="#333" /></Svg></button>
    </div>

    <div className="mt-[3px] ml-1 w-[275px] h-[23px] shrink-0 px-[2px] flex items-center rounded-r-[2px] border-r border-[#c8c5d0] bg-linear-to-b from-[#fbf9f9] via-[#f3e3ee] via-40% to-[#c3cfe4]">
      <span className="w-[2px] h-3 mr-px border-l-2 border-dotted border-[#b5b1ac]" />
      <button aria-label="Auswählen" className="w-[27px] flex justify-center"><SelectIcon /></button>
      <button aria-label="Drucken" className="w-[29px] flex justify-center border-l border-[#c8c5d0]"><PrinterIcon /></button>
      <button aria-label="Exportieren" className="w-[30px] flex justify-center border-l border-[#c8c5d0]"><ExportIcon /></button>
      <button className="w-[77px] pl-[4px] pt-px flex items-center justify-between pr-[7px] border-l border-[#c8c5d0] text-[#888] whitespace-nowrap">Strg+F7<GreenArrow back /></button>
      <button className="w-[77px] pl-1 pt-px flex items-center gap-[7px] border-l border-[#c8c5d0] whitespace-nowrap"><GreenArrow />Strg+F8</button>
      <button aria-label="Zweispaltig" className="w-[22px] flex justify-end border-l border-[#c8c5d0]"><ColumnsIcon /></button>
    </div>

    <div className="mt-[3px] ml-[2px] mr-[1px] flex-1 min-h-0 flex flex-col border border-[#b4c8dc] rounded-[3px] bg-white">
      <div className="mt-[11px] ml-3 mr-3 mb-[11px] flex-1 min-h-0 flex overflow-hidden shadow-[2px_2px_2px_#8a8a8a] bg-white">
        <div className="flex-1 min-w-0 -ml-3 overflow-hidden">
          <p className="h-8 pl-4 leading-[20px]">Mantelbogen Seite 1</p>
          <FormSheet />
        </div>
        <ScrollBar thumb="h-[577px]" />
      </div>
    </div>

    <div className="h-[27px] shrink-0 pt-1 pl-0.5 flex items-start" role="tablist">
      <button role="tab" className="w-[58px] h-[21px] pl-[3px] flex items-center gap-[5px] border border-[#e2ddd6] bg-[#fff9f3] whitespace-nowrap"><BulletsIcon />Details</button>
      <button role="tab" aria-selected="true" className="w-[57px] h-[23px] pt-[2px] border-b border-[#ddd] bg-white">Formular</button>
      <button role="tab" className="w-[80px] h-[21px] border border-[#e2ddd6] bg-[#fff9f3]">Berechnungen</button>
    </div>
  </aside>
);

export default function App() {
  return (
    <div className="h-screen min-w-[1280px] flex flex-col overflow-hidden border-x border-b border-[#1979ca] bg-white text-black font-['Open_Sans',sans-serif] text-[11px]">
      <TitleBar />
      <MenuBar />
      <MainToolbar />
      <TaxToolbar />
      <main className="flex-1 min-h-0 flex bg-[#f7fffb] font-['DejaVu_Sans_Condensed',sans-serif]">
        <div className="w-[22px] shrink-0 pt-[3px]">
          <button className="w-5 h-[67px] pt-[6px] flex flex-col items-center gap-[6px] border-r border-b border-[#e2ddd6] bg-[#fff9f3]">
            <Svg className="w-4 h-[9px]" box="0 3 16 10"><path d="M3.500 4.500h9v6h-9zM1 10.500h14v1.500H1z" fill="#f0f0ee" stroke="#9a9a96" /></Svg>
            <span className="pr-1 [writing-mode:vertical-rl] leading-4">Register</span>
          </button>
        </div>
        <TaxPanel />
        <div className="w-[5px] shrink-0 bg-[#fff9f3]" />
        <FormPanel />
      </main>
      <div className="h-[22px] shrink-0 pl-6 flex bg-linear-to-r from-[#f5fffa] to-[#fffbfb] font-['DejaVu_Sans_Condensed',sans-serif]">
        <button className="w-[110px] h-[21px] mt-px pl-1 pt-px flex items-center gap-[26px] bg-[#fff9f3] border-t border-r border-[#e2ddd6]"><ChatIcon />Historie</button>
        <button aria-label="Liste" className="w-[19px] h-[21px] mt-px flex items-center justify-center bg-[#fff9f3] border-t border-r border-[#e2ddd6]"><LinesIcon /></button>
        <button aria-label="Text" className="w-[19px] h-[21px] mt-px flex items-center justify-center bg-[#fff9f3] border-t border-r border-[#e2ddd6]"><LinesIcon letter /></button>
      </div>
      <footer className="h-[22px] shrink-0 pl-1 pr-0.5 flex items-center justify-between border-t border-[#ddd9d5] bg-[#fff9f3]">
        Bereit
        <Svg className="w-[11px] h-[11px] self-end" box="0 0 11 11"><path d="M8 0h2v2H8zM4 4h2v2H4zM8 4h2v2H8zM0 8h2v2H0zM4 8h2v2H4zM8 8h2v2H8z" fill="#b9b5b0" /></Svg>
      </footer>
    </div>
  );
}
